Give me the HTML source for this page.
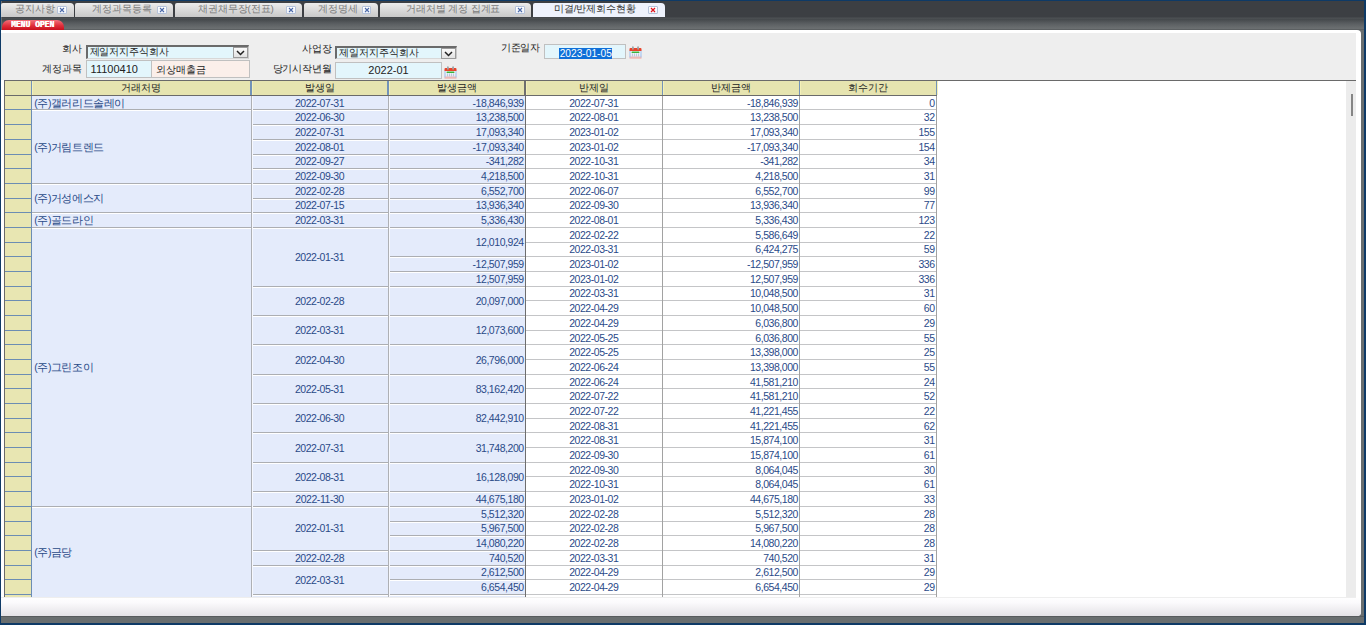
<!DOCTYPE html>
<html><head><meta charset="utf-8">
<style>
html,body{margin:0;padding:0;}
body{width:1366px;height:625px;overflow:hidden;position:relative;background:#696e6f;font-family:"Liberation Sans",sans-serif;}
.a{position:absolute;}
.t{position:absolute;height:14px;line-height:14px;font-size:10.5px;color:#2a4a88;white-space:nowrap;letter-spacing:-0.45px;}
.tl{text-align:left;}
.tc{text-align:center;}
.tr{text-align:right;}
.th{color:#222;text-align:center;top:81px;letter-spacing:0;font-size:9.6px;}
.tab{top:2.5px;height:14.5px;border-radius:2px 4px 0 0;background:linear-gradient(#ececec,#d6d6d6 60%,#c9c9c9);}
.act{background:#eef2fc;}
.tabt{top:1.8px;height:14.5px;line-height:14.5px;font-size:9.8px;letter-spacing:-0.1px;color:#7a7a7a;white-space:nowrap;}
.cls{top:6.3px;width:7.6px;height:5.8px;border:1px solid #b4c2da;background:linear-gradient(#ffffff,#eef2f8);border-radius:1px;overflow:hidden;}
.cls svg{position:absolute;left:0;top:0;}
svg{display:block;}
.lbl{position:absolute;font-size:9.8px;letter-spacing:-0.2px;color:#1a1a1a;white-space:nowrap;line-height:12px;text-align:right;}
.inp{position:absolute;box-sizing:border-box;border:1px solid #c0c0c0;background:#e3f6fc;font-size:11px;color:#222;line-height:15px;white-space:nowrap;}
.ko{font-size:9.8px;letter-spacing:-0.1px;}
.sel{border-top:2px solid #6a6a6a;border-left:2px solid #6a6a6a;border-right:1px solid #c8c8c8;border-bottom:1px solid #d8d8d8;}
.dd{position:absolute;right:0;top:0;width:15px;height:11px;box-sizing:border-box;border:1px solid #9a9a9a;background:linear-gradient(#fafafa,#e2e2e2);}
</style></head><body>
<!-- frame -->
<div class="a" style="left:0;top:0;width:1366px;height:1px;background:#0e3a66;"></div>
<div class="a" style="left:1.5px;top:1px;width:1362.5px;height:16px;background:#3c3f43;"></div>
<div class="a" style="left:1.5px;top:17px;width:1362.5px;height:12.5px;background:linear-gradient(#3c3f43 0px,#4d5154 1px,#464a4d 2.5px,#5c6063 55%,#6b6f71 88%,#55595b 100%);"></div>
<div class="a tab" style="left:1px;width:72.5px;"></div>
<div class="a tabt" style="left:15px;">공지사항</div>
<div class="a cls" style="left:57px;"><svg width="8" height="6" viewBox="0 0 8 6"><path d="M2 1 L6 5 M6 1 L2 5" stroke="#4a68a8" stroke-width="1.1"/></svg></div>
<div class="a tab" style="left:75px;width:98px;"></div>
<div class="a tabt" style="left:92px;">계정과목등록</div>
<div class="a cls" style="left:157px;"><svg width="8" height="6" viewBox="0 0 8 6"><path d="M2 1 L6 5 M6 1 L2 5" stroke="#4a68a8" stroke-width="1.1"/></svg></div>
<div class="a tab" style="left:175px;width:127px;"></div>
<div class="a tabt" style="left:198px;">채권채무장(전표)</div>
<div class="a cls" style="left:286px;"><svg width="8" height="6" viewBox="0 0 8 6"><path d="M2 1 L6 5 M6 1 L2 5" stroke="#4a68a8" stroke-width="1.1"/></svg></div>
<div class="a tab" style="left:304px;width:73.5px;"></div>
<div class="a tabt" style="left:318px;">계정명세</div>
<div class="a cls" style="left:361.5px;"><svg width="8" height="6" viewBox="0 0 8 6"><path d="M2 1 L6 5 M6 1 L2 5" stroke="#4a68a8" stroke-width="1.1"/></svg></div>
<div class="a tab" style="left:379.5px;width:151.5px;"></div>
<div class="a tabt" style="left:406px;">거래처별 계정 집계표</div>
<div class="a cls" style="left:515px;"><svg width="8" height="6" viewBox="0 0 8 6"><path d="M2 1 L6 5 M6 1 L2 5" stroke="#4a68a8" stroke-width="1.1"/></svg></div>
<div class="a tab act" style="left:533px;width:132px;"></div>
<div class="a tabt" style="left:554px;color:#333;">미결/반제회수현황</div>
<div class="a cls" style="left:648px;"><svg width="8" height="6" viewBox="0 0 8 6"><path d="M2 1 L6 5 M6 1 L2 5" stroke="#e0101a" stroke-width="1.2"/></svg></div>
<div class="a" style="left:1.5px;top:19.5px;width:62.5px;height:10px;border-radius:7px 7px 0 0;background:linear-gradient(#f2707a,#e0303c 55%,#c8101c);"></div>
<div class="a" style="left:11px;top:20px;font:bold 8px/10px 'Liberation Mono',monospace;color:#fff;letter-spacing:0;text-shadow:0.4px 0 0 #fff;transform:scaleY(1.2);transform-origin:0 60%;">MENU OPEN</div>
<!-- panel -->
<div class="a" style="left:1px;top:29.5px;width:1360px;height:586px;background:#fff;border-radius:0 4px 4px 0;"></div>
<div class="a" style="left:1px;top:33px;width:1355px;height:47.3px;background:#eeeeee;"></div>
<div class="a" style="left:1px;top:597px;width:1359.5px;height:18.6px;border-radius:0 0 4px 0;background:linear-gradient(#ffffff,#fbfafc 30%,#e4e2e6);"></div>
<div class="a" style="left:0;top:0;width:1.2px;height:625px;background:#0e3a66;"></div>
<div class="a" style="left:1364px;top:0;width:2px;height:625px;background:#0e3a66;"></div>
<div class="a" style="left:0;top:623px;width:1366px;height:2px;background:#0e3a66;"></div>
<!-- form -->
<div class="lbl" style="left:20px;top:43px;width:61.5px;">회사</div>
<div class="inp sel" style="left:85.6px;top:45.4px;width:163.3px;height:13.2px;line-height:9.5px;padding-left:2px;"><span class="ko">제일저지주식회사</span><div class="dd"><svg width="13" height="9" viewBox="0 0 13 9"><path d="M3 3 L6.5 6.5 L10 3" stroke="#222" stroke-width="1.5" fill="none"/></svg></div></div>
<div class="lbl" style="left:20px;top:62.5px;width:61.5px;">계정과목</div>
<div class="inp" style="left:85.6px;top:60.3px;width:66px;height:18.1px;line-height:16px;padding-left:4px;">11100410</div>
<div class="inp" style="left:151.2px;top:60.3px;width:98.5px;height:18.1px;line-height:16px;padding-left:4px;background:#fbefea;"><span class="ko">외상매출금</span></div>
<div class="lbl" style="left:250px;top:43px;width:81.5px;">사업장</div>
<div class="inp sel" style="left:335.3px;top:45.5px;width:121.5px;height:13.3px;line-height:9.5px;padding-left:2px;"><span class="ko">제일저지주식회사</span><div class="dd"><svg width="13" height="9" viewBox="0 0 13 9"><path d="M3 3 L6.5 6.5 L10 3" stroke="#222" stroke-width="1.5" fill="none"/></svg></div></div>
<div class="lbl" style="left:250px;top:62.5px;width:81.5px;">당기시작년월</div>
<div class="inp" style="left:335.3px;top:62.4px;width:106.4px;height:16.4px;line-height:14px;text-align:center;">2022-01</div>
<div class="a" style="left:444.2px;top:65.5px;"><svg width="13" height="13" viewBox="0 0 13 13"><defs><linearGradient id="cb" x1="0" y1="0" x2="0" y2="1"><stop offset="0" stop-color="#f4f8fc"/><stop offset="0.6" stop-color="#e8eef8"/><stop offset="1" stop-color="#f0a098"/></linearGradient></defs><rect x="0.5" y="4.5" width="12" height="8" fill="url(#cb)"/><rect x="0.5" y="4.5" width="1" height="7" fill="#9cc0ec"/><rect x="11.5" y="4.5" width="1" height="7" fill="#9cc0ec"/><path d="M0.5 5 V3 Q0.5 2 1.5 2 H11.5 Q12.5 2 12.5 3 V5 Z" fill="#e8432a"/><rect x="2.5" y="5.6" width="8" height="1.3" rx="0.6" fill="#3cb43c"/><path d="M3.5 7.5v3M5.5 7.5v3M7.5 7.5v3M9.5 7.5v3" stroke="#b8c4d8" stroke-width="0.9"/><rect x="3" y="0.3" width="1.8" height="3.4" rx="0.9" fill="#a0a4a8"/><rect x="8.2" y="0.3" width="1.8" height="3.4" rx="0.9" fill="#a0a4a8"/></svg></div>
<div class="lbl" style="left:470px;top:41.5px;width:70px;">기준일자</div>
<div class="inp" style="left:544.2px;top:44.2px;width:81.4px;height:14.5px;line-height:12px;"><span style="position:absolute;left:14px;top:2.9px;height:11px;line-height:11px;background:#0f6fd8;color:#fff;padding:0 0.5px;font-size:10.2px;">2023-01-05</span></div>
<div class="a" style="left:628.5px;top:46px;"><svg width="13" height="13" viewBox="0 0 13 13"><defs><linearGradient id="cb" x1="0" y1="0" x2="0" y2="1"><stop offset="0" stop-color="#f4f8fc"/><stop offset="0.6" stop-color="#e8eef8"/><stop offset="1" stop-color="#f0a098"/></linearGradient></defs><rect x="0.5" y="4.5" width="12" height="8" fill="url(#cb)"/><rect x="0.5" y="4.5" width="1" height="7" fill="#9cc0ec"/><rect x="11.5" y="4.5" width="1" height="7" fill="#9cc0ec"/><path d="M0.5 5 V3 Q0.5 2 1.5 2 H11.5 Q12.5 2 12.5 3 V5 Z" fill="#e8432a"/><rect x="2.5" y="5.6" width="8" height="1.3" rx="0.6" fill="#3cb43c"/><path d="M3.5 7.5v3M5.5 7.5v3M7.5 7.5v3M9.5 7.5v3" stroke="#b8c4d8" stroke-width="0.9"/><rect x="3" y="0.3" width="1.8" height="3.4" rx="0.9" fill="#a0a4a8"/><rect x="8.2" y="0.3" width="1.8" height="3.4" rx="0.9" fill="#a0a4a8"/></svg></div>
<!-- table -->
<div class="a" style="left:1px;top:80.3px;width:1355px;height:516.7px;background:#fff;"></div>
<div class="a" style="left:4.5px;top:80.3px;width:932.10px;height:15px;background:#e6e4b0;"></div>
<div class="t th" style="left:31.30px;top:81px;width:219.70px;">거래처명</div>
<div class="t th" style="left:251.00px;top:81px;width:137.00px;">발생일</div>
<div class="t th" style="left:388.00px;top:81px;width:137.20px;">발생금액</div>
<div class="t th" style="left:525.20px;top:81px;width:137.20px;">반제일</div>
<div class="t th" style="left:662.40px;top:81px;width:137.10px;">반제금액</div>
<div class="t th" style="left:799.50px;top:81px;width:137.10px;">회수기간</div>
<div class="a" style="left:30.55px;top:80.3px;width:1.5px;height:15px;background:#7393b8;"></div>
<div class="a" style="left:32.05px;top:80.3px;width:1px;height:15px;background:#f3f0b8;"></div>
<div class="a" style="left:250.25px;top:80.3px;width:1.5px;height:15px;background:#7393b8;"></div>
<div class="a" style="left:251.75px;top:80.3px;width:1px;height:15px;background:#f3f0b8;"></div>
<div class="a" style="left:387.25px;top:80.3px;width:1.5px;height:15px;background:#7393b8;"></div>
<div class="a" style="left:388.75px;top:80.3px;width:1px;height:15px;background:#f3f0b8;"></div>
<div class="a" style="left:524.45px;top:80.3px;width:1.5px;height:15px;background:#6e6e6e;"></div>
<div class="a" style="left:525.95px;top:80.3px;width:1px;height:15px;background:#f3f0b8;"></div>
<div class="a" style="left:661.65px;top:80.3px;width:1.5px;height:15px;background:#7393b8;"></div>
<div class="a" style="left:663.15px;top:80.3px;width:1px;height:15px;background:#f3f0b8;"></div>
<div class="a" style="left:798.75px;top:80.3px;width:1.5px;height:15px;background:#7393b8;"></div>
<div class="a" style="left:800.25px;top:80.3px;width:1px;height:15px;background:#f3f0b8;"></div>
<div class="a" style="left:935.85px;top:80.3px;width:1.5px;height:15px;background:#7393b8;"></div>
<div class="a" style="left:937.35px;top:80.3px;width:1px;height:15px;background:#f3f0b8;"></div>
<div class="a " style="left:4.50px;top:95.30px;width:26.80px;height:501.70px;background:#e8e6b2;"></div>
<div class="a " style="left:4.50px;top:109.48px;width:26.80px;height:1.00px;background:#6c8db3;"></div>
<div class="a " style="left:4.50px;top:124.16px;width:26.80px;height:1.00px;background:#6c8db3;"></div>
<div class="a " style="left:4.50px;top:138.84px;width:26.80px;height:1.00px;background:#6c8db3;"></div>
<div class="a " style="left:4.50px;top:153.52px;width:26.80px;height:1.00px;background:#6c8db3;"></div>
<div class="a " style="left:4.50px;top:168.20px;width:26.80px;height:1.00px;background:#6c8db3;"></div>
<div class="a " style="left:4.50px;top:182.88px;width:26.80px;height:1.00px;background:#6c8db3;"></div>
<div class="a " style="left:4.50px;top:197.56px;width:26.80px;height:1.00px;background:#6c8db3;"></div>
<div class="a " style="left:4.50px;top:212.24px;width:26.80px;height:1.00px;background:#6c8db3;"></div>
<div class="a " style="left:4.50px;top:226.92px;width:26.80px;height:1.00px;background:#6c8db3;"></div>
<div class="a " style="left:4.50px;top:241.60px;width:26.80px;height:1.00px;background:#6c8db3;"></div>
<div class="a " style="left:4.50px;top:256.28px;width:26.80px;height:1.00px;background:#6c8db3;"></div>
<div class="a " style="left:4.50px;top:270.96px;width:26.80px;height:1.00px;background:#6c8db3;"></div>
<div class="a " style="left:4.50px;top:285.64px;width:26.80px;height:1.00px;background:#6c8db3;"></div>
<div class="a " style="left:4.50px;top:300.32px;width:26.80px;height:1.00px;background:#6c8db3;"></div>
<div class="a " style="left:4.50px;top:315.00px;width:26.80px;height:1.00px;background:#6c8db3;"></div>
<div class="a " style="left:4.50px;top:329.68px;width:26.80px;height:1.00px;background:#6c8db3;"></div>
<div class="a " style="left:4.50px;top:344.36px;width:26.80px;height:1.00px;background:#6c8db3;"></div>
<div class="a " style="left:4.50px;top:359.04px;width:26.80px;height:1.00px;background:#6c8db3;"></div>
<div class="a " style="left:4.50px;top:373.72px;width:26.80px;height:1.00px;background:#6c8db3;"></div>
<div class="a " style="left:4.50px;top:388.40px;width:26.80px;height:1.00px;background:#6c8db3;"></div>
<div class="a " style="left:4.50px;top:403.08px;width:26.80px;height:1.00px;background:#6c8db3;"></div>
<div class="a " style="left:4.50px;top:417.76px;width:26.80px;height:1.00px;background:#6c8db3;"></div>
<div class="a " style="left:4.50px;top:432.44px;width:26.80px;height:1.00px;background:#6c8db3;"></div>
<div class="a " style="left:4.50px;top:447.12px;width:26.80px;height:1.00px;background:#6c8db3;"></div>
<div class="a " style="left:4.50px;top:461.80px;width:26.80px;height:1.00px;background:#6c8db3;"></div>
<div class="a " style="left:4.50px;top:476.48px;width:26.80px;height:1.00px;background:#6c8db3;"></div>
<div class="a " style="left:4.50px;top:491.16px;width:26.80px;height:1.00px;background:#6c8db3;"></div>
<div class="a " style="left:4.50px;top:505.84px;width:26.80px;height:1.00px;background:#6c8db3;"></div>
<div class="a " style="left:4.50px;top:520.52px;width:26.80px;height:1.00px;background:#6c8db3;"></div>
<div class="a " style="left:4.50px;top:535.20px;width:26.80px;height:1.00px;background:#6c8db3;"></div>
<div class="a " style="left:4.50px;top:549.88px;width:26.80px;height:1.00px;background:#6c8db3;"></div>
<div class="a " style="left:4.50px;top:564.56px;width:26.80px;height:1.00px;background:#6c8db3;"></div>
<div class="a " style="left:4.50px;top:579.24px;width:26.80px;height:1.00px;background:#6c8db3;"></div>
<div class="a " style="left:4.50px;top:593.92px;width:26.80px;height:1.00px;background:#6c8db3;"></div>
<div class="a " style="left:31.30px;top:95.30px;width:493.90px;height:501.70px;background:#e4ebfb;"></div>
<div class="a " style="left:525.20px;top:95.30px;width:411.40px;height:501.70px;background:#ffffff;"></div>
<div class="t tl" style="left:34.30px;top:95.64px;width:213.70px;">(주)갤러리드솔레이</div>
<div class="a " style="left:31.30px;top:109.48px;width:219.70px;height:1.00px;background:#acaeb2;"></div>
<div class="a " style="left:31.30px;top:110.48px;width:219.70px;height:1.00px;background:#ffffff;"></div>
<div class="t tl" style="left:34.30px;top:139.68px;width:213.70px;">(주)거림트렌드</div>
<div class="a " style="left:31.30px;top:182.88px;width:219.70px;height:1.00px;background:#acaeb2;"></div>
<div class="a " style="left:31.30px;top:183.88px;width:219.70px;height:1.00px;background:#ffffff;"></div>
<div class="t tl" style="left:34.30px;top:191.06px;width:213.70px;">(주)거성에스지</div>
<div class="a " style="left:31.30px;top:212.24px;width:219.70px;height:1.00px;background:#acaeb2;"></div>
<div class="a " style="left:31.30px;top:213.24px;width:219.70px;height:1.00px;background:#ffffff;"></div>
<div class="t tl" style="left:34.30px;top:213.08px;width:213.70px;">(주)골드라인</div>
<div class="a " style="left:31.30px;top:226.92px;width:219.70px;height:1.00px;background:#acaeb2;"></div>
<div class="a " style="left:31.30px;top:227.92px;width:219.70px;height:1.00px;background:#ffffff;"></div>
<div class="t tl" style="left:34.30px;top:359.88px;width:213.70px;">(주)그린조이</div>
<div class="a " style="left:31.30px;top:505.84px;width:219.70px;height:1.00px;background:#acaeb2;"></div>
<div class="a " style="left:31.30px;top:506.84px;width:219.70px;height:1.00px;background:#ffffff;"></div>
<div class="t tl" style="left:34.30px;top:544.67px;width:213.70px;">(주)금당</div>
<div class="t tc" style="left:251.00px;top:95.64px;width:137.00px;">2022-07-31</div>
<div class="a " style="left:251.00px;top:109.48px;width:137.00px;height:1.00px;background:#acaeb2;"></div>
<div class="a " style="left:251.00px;top:110.48px;width:137.00px;height:1.00px;background:#ffffff;"></div>
<div class="t tc" style="left:251.00px;top:110.32px;width:137.00px;">2022-06-30</div>
<div class="a " style="left:251.00px;top:124.16px;width:137.00px;height:1.00px;background:#acaeb2;"></div>
<div class="a " style="left:251.00px;top:125.16px;width:137.00px;height:1.00px;background:#ffffff;"></div>
<div class="t tc" style="left:251.00px;top:125.00px;width:137.00px;">2022-07-31</div>
<div class="a " style="left:251.00px;top:138.84px;width:137.00px;height:1.00px;background:#acaeb2;"></div>
<div class="a " style="left:251.00px;top:139.84px;width:137.00px;height:1.00px;background:#ffffff;"></div>
<div class="t tc" style="left:251.00px;top:139.68px;width:137.00px;">2022-08-01</div>
<div class="a " style="left:251.00px;top:153.52px;width:137.00px;height:1.00px;background:#acaeb2;"></div>
<div class="a " style="left:251.00px;top:154.52px;width:137.00px;height:1.00px;background:#ffffff;"></div>
<div class="t tc" style="left:251.00px;top:154.36px;width:137.00px;">2022-09-27</div>
<div class="a " style="left:251.00px;top:168.20px;width:137.00px;height:1.00px;background:#acaeb2;"></div>
<div class="a " style="left:251.00px;top:169.20px;width:137.00px;height:1.00px;background:#ffffff;"></div>
<div class="t tc" style="left:251.00px;top:169.04px;width:137.00px;">2022-09-30</div>
<div class="a " style="left:251.00px;top:182.88px;width:137.00px;height:1.00px;background:#acaeb2;"></div>
<div class="a " style="left:251.00px;top:183.88px;width:137.00px;height:1.00px;background:#ffffff;"></div>
<div class="t tc" style="left:251.00px;top:183.72px;width:137.00px;">2022-02-28</div>
<div class="a " style="left:251.00px;top:197.56px;width:137.00px;height:1.00px;background:#acaeb2;"></div>
<div class="a " style="left:251.00px;top:198.56px;width:137.00px;height:1.00px;background:#ffffff;"></div>
<div class="t tc" style="left:251.00px;top:198.40px;width:137.00px;">2022-07-15</div>
<div class="a " style="left:251.00px;top:212.24px;width:137.00px;height:1.00px;background:#acaeb2;"></div>
<div class="a " style="left:251.00px;top:213.24px;width:137.00px;height:1.00px;background:#ffffff;"></div>
<div class="t tc" style="left:251.00px;top:213.08px;width:137.00px;">2022-03-31</div>
<div class="a " style="left:251.00px;top:226.92px;width:137.00px;height:1.00px;background:#acaeb2;"></div>
<div class="a " style="left:251.00px;top:227.92px;width:137.00px;height:1.00px;background:#ffffff;"></div>
<div class="t tc" style="left:251.00px;top:249.78px;width:137.00px;">2022-01-31</div>
<div class="a " style="left:251.00px;top:285.64px;width:137.00px;height:1.00px;background:#acaeb2;"></div>
<div class="a " style="left:251.00px;top:286.64px;width:137.00px;height:1.00px;background:#ffffff;"></div>
<div class="t tc" style="left:251.00px;top:293.82px;width:137.00px;">2022-02-28</div>
<div class="a " style="left:251.00px;top:315.00px;width:137.00px;height:1.00px;background:#acaeb2;"></div>
<div class="a " style="left:251.00px;top:316.00px;width:137.00px;height:1.00px;background:#ffffff;"></div>
<div class="t tc" style="left:251.00px;top:323.18px;width:137.00px;">2022-03-31</div>
<div class="a " style="left:251.00px;top:344.36px;width:137.00px;height:1.00px;background:#acaeb2;"></div>
<div class="a " style="left:251.00px;top:345.36px;width:137.00px;height:1.00px;background:#ffffff;"></div>
<div class="t tc" style="left:251.00px;top:352.54px;width:137.00px;">2022-04-30</div>
<div class="a " style="left:251.00px;top:373.72px;width:137.00px;height:1.00px;background:#acaeb2;"></div>
<div class="a " style="left:251.00px;top:374.72px;width:137.00px;height:1.00px;background:#ffffff;"></div>
<div class="t tc" style="left:251.00px;top:381.90px;width:137.00px;">2022-05-31</div>
<div class="a " style="left:251.00px;top:403.08px;width:137.00px;height:1.00px;background:#acaeb2;"></div>
<div class="a " style="left:251.00px;top:404.08px;width:137.00px;height:1.00px;background:#ffffff;"></div>
<div class="t tc" style="left:251.00px;top:411.26px;width:137.00px;">2022-06-30</div>
<div class="a " style="left:251.00px;top:432.44px;width:137.00px;height:1.00px;background:#acaeb2;"></div>
<div class="a " style="left:251.00px;top:433.44px;width:137.00px;height:1.00px;background:#ffffff;"></div>
<div class="t tc" style="left:251.00px;top:440.62px;width:137.00px;">2022-07-31</div>
<div class="a " style="left:251.00px;top:461.80px;width:137.00px;height:1.00px;background:#acaeb2;"></div>
<div class="a " style="left:251.00px;top:462.80px;width:137.00px;height:1.00px;background:#ffffff;"></div>
<div class="t tc" style="left:251.00px;top:469.98px;width:137.00px;">2022-08-31</div>
<div class="a " style="left:251.00px;top:491.16px;width:137.00px;height:1.00px;background:#acaeb2;"></div>
<div class="a " style="left:251.00px;top:492.16px;width:137.00px;height:1.00px;background:#ffffff;"></div>
<div class="t tc" style="left:251.00px;top:492.00px;width:137.00px;">2022-11-30</div>
<div class="a " style="left:251.00px;top:505.84px;width:137.00px;height:1.00px;background:#acaeb2;"></div>
<div class="a " style="left:251.00px;top:506.84px;width:137.00px;height:1.00px;background:#ffffff;"></div>
<div class="t tc" style="left:251.00px;top:521.36px;width:137.00px;">2022-01-31</div>
<div class="a " style="left:251.00px;top:549.88px;width:137.00px;height:1.00px;background:#acaeb2;"></div>
<div class="a " style="left:251.00px;top:550.88px;width:137.00px;height:1.00px;background:#ffffff;"></div>
<div class="t tc" style="left:251.00px;top:550.72px;width:137.00px;">2022-02-28</div>
<div class="a " style="left:251.00px;top:564.56px;width:137.00px;height:1.00px;background:#acaeb2;"></div>
<div class="a " style="left:251.00px;top:565.56px;width:137.00px;height:1.00px;background:#ffffff;"></div>
<div class="t tc" style="left:251.00px;top:572.74px;width:137.00px;">2022-03-31</div>
<div class="a " style="left:251.00px;top:593.92px;width:137.00px;height:1.00px;background:#acaeb2;"></div>
<div class="a " style="left:251.00px;top:594.92px;width:137.00px;height:1.00px;background:#ffffff;"></div>
<div class="t tr" style="left:388.00px;top:95.64px;width:135.70px;">-18,846,939</div>
<div class="a " style="left:388.00px;top:109.48px;width:137.20px;height:1.00px;background:#acaeb2;"></div>
<div class="a " style="left:388.00px;top:110.48px;width:137.20px;height:1.00px;background:#ffffff;"></div>
<div class="t tr" style="left:388.00px;top:110.32px;width:135.70px;">13,238,500</div>
<div class="a " style="left:388.00px;top:124.16px;width:137.20px;height:1.00px;background:#acaeb2;"></div>
<div class="a " style="left:388.00px;top:125.16px;width:137.20px;height:1.00px;background:#ffffff;"></div>
<div class="t tr" style="left:388.00px;top:125.00px;width:135.70px;">17,093,340</div>
<div class="a " style="left:388.00px;top:138.84px;width:137.20px;height:1.00px;background:#acaeb2;"></div>
<div class="a " style="left:388.00px;top:139.84px;width:137.20px;height:1.00px;background:#ffffff;"></div>
<div class="t tr" style="left:388.00px;top:139.68px;width:135.70px;">-17,093,340</div>
<div class="a " style="left:388.00px;top:153.52px;width:137.20px;height:1.00px;background:#acaeb2;"></div>
<div class="a " style="left:388.00px;top:154.52px;width:137.20px;height:1.00px;background:#ffffff;"></div>
<div class="t tr" style="left:388.00px;top:154.36px;width:135.70px;">-341,282</div>
<div class="a " style="left:388.00px;top:168.20px;width:137.20px;height:1.00px;background:#acaeb2;"></div>
<div class="a " style="left:388.00px;top:169.20px;width:137.20px;height:1.00px;background:#ffffff;"></div>
<div class="t tr" style="left:388.00px;top:169.04px;width:135.70px;">4,218,500</div>
<div class="a " style="left:388.00px;top:182.88px;width:137.20px;height:1.00px;background:#acaeb2;"></div>
<div class="a " style="left:388.00px;top:183.88px;width:137.20px;height:1.00px;background:#ffffff;"></div>
<div class="t tr" style="left:388.00px;top:183.72px;width:135.70px;">6,552,700</div>
<div class="a " style="left:388.00px;top:197.56px;width:137.20px;height:1.00px;background:#acaeb2;"></div>
<div class="a " style="left:388.00px;top:198.56px;width:137.20px;height:1.00px;background:#ffffff;"></div>
<div class="t tr" style="left:388.00px;top:198.40px;width:135.70px;">13,936,340</div>
<div class="a " style="left:388.00px;top:212.24px;width:137.20px;height:1.00px;background:#acaeb2;"></div>
<div class="a " style="left:388.00px;top:213.24px;width:137.20px;height:1.00px;background:#ffffff;"></div>
<div class="t tr" style="left:388.00px;top:213.08px;width:135.70px;">5,336,430</div>
<div class="a " style="left:388.00px;top:226.92px;width:137.20px;height:1.00px;background:#acaeb2;"></div>
<div class="a " style="left:388.00px;top:227.92px;width:137.20px;height:1.00px;background:#ffffff;"></div>
<div class="t tr" style="left:388.00px;top:235.10px;width:135.70px;">12,010,924</div>
<div class="a " style="left:388.00px;top:256.28px;width:137.20px;height:1.00px;background:#acaeb2;"></div>
<div class="a " style="left:388.00px;top:257.28px;width:137.20px;height:1.00px;background:#ffffff;"></div>
<div class="t tr" style="left:388.00px;top:257.12px;width:135.70px;">-12,507,959</div>
<div class="a " style="left:388.00px;top:270.96px;width:137.20px;height:1.00px;background:#acaeb2;"></div>
<div class="a " style="left:388.00px;top:271.96px;width:137.20px;height:1.00px;background:#ffffff;"></div>
<div class="t tr" style="left:388.00px;top:271.80px;width:135.70px;">12,507,959</div>
<div class="a " style="left:388.00px;top:285.64px;width:137.20px;height:1.00px;background:#acaeb2;"></div>
<div class="a " style="left:388.00px;top:286.64px;width:137.20px;height:1.00px;background:#ffffff;"></div>
<div class="t tr" style="left:388.00px;top:293.82px;width:135.70px;">20,097,000</div>
<div class="a " style="left:388.00px;top:315.00px;width:137.20px;height:1.00px;background:#acaeb2;"></div>
<div class="a " style="left:388.00px;top:316.00px;width:137.20px;height:1.00px;background:#ffffff;"></div>
<div class="t tr" style="left:388.00px;top:323.18px;width:135.70px;">12,073,600</div>
<div class="a " style="left:388.00px;top:344.36px;width:137.20px;height:1.00px;background:#acaeb2;"></div>
<div class="a " style="left:388.00px;top:345.36px;width:137.20px;height:1.00px;background:#ffffff;"></div>
<div class="t tr" style="left:388.00px;top:352.54px;width:135.70px;">26,796,000</div>
<div class="a " style="left:388.00px;top:373.72px;width:137.20px;height:1.00px;background:#acaeb2;"></div>
<div class="a " style="left:388.00px;top:374.72px;width:137.20px;height:1.00px;background:#ffffff;"></div>
<div class="t tr" style="left:388.00px;top:381.90px;width:135.70px;">83,162,420</div>
<div class="a " style="left:388.00px;top:403.08px;width:137.20px;height:1.00px;background:#acaeb2;"></div>
<div class="a " style="left:388.00px;top:404.08px;width:137.20px;height:1.00px;background:#ffffff;"></div>
<div class="t tr" style="left:388.00px;top:411.26px;width:135.70px;">82,442,910</div>
<div class="a " style="left:388.00px;top:432.44px;width:137.20px;height:1.00px;background:#acaeb2;"></div>
<div class="a " style="left:388.00px;top:433.44px;width:137.20px;height:1.00px;background:#ffffff;"></div>
<div class="t tr" style="left:388.00px;top:440.62px;width:135.70px;">31,748,200</div>
<div class="a " style="left:388.00px;top:461.80px;width:137.20px;height:1.00px;background:#acaeb2;"></div>
<div class="a " style="left:388.00px;top:462.80px;width:137.20px;height:1.00px;background:#ffffff;"></div>
<div class="t tr" style="left:388.00px;top:469.98px;width:135.70px;">16,128,090</div>
<div class="a " style="left:388.00px;top:491.16px;width:137.20px;height:1.00px;background:#acaeb2;"></div>
<div class="a " style="left:388.00px;top:492.16px;width:137.20px;height:1.00px;background:#ffffff;"></div>
<div class="t tr" style="left:388.00px;top:492.00px;width:135.70px;">44,675,180</div>
<div class="a " style="left:388.00px;top:505.84px;width:137.20px;height:1.00px;background:#acaeb2;"></div>
<div class="a " style="left:388.00px;top:506.84px;width:137.20px;height:1.00px;background:#ffffff;"></div>
<div class="t tr" style="left:388.00px;top:506.68px;width:135.70px;">5,512,320</div>
<div class="a " style="left:388.00px;top:520.52px;width:137.20px;height:1.00px;background:#acaeb2;"></div>
<div class="a " style="left:388.00px;top:521.52px;width:137.20px;height:1.00px;background:#ffffff;"></div>
<div class="t tr" style="left:388.00px;top:521.36px;width:135.70px;">5,967,500</div>
<div class="a " style="left:388.00px;top:535.20px;width:137.20px;height:1.00px;background:#acaeb2;"></div>
<div class="a " style="left:388.00px;top:536.20px;width:137.20px;height:1.00px;background:#ffffff;"></div>
<div class="t tr" style="left:388.00px;top:536.04px;width:135.70px;">14,080,220</div>
<div class="a " style="left:388.00px;top:549.88px;width:137.20px;height:1.00px;background:#acaeb2;"></div>
<div class="a " style="left:388.00px;top:550.88px;width:137.20px;height:1.00px;background:#ffffff;"></div>
<div class="t tr" style="left:388.00px;top:550.72px;width:135.70px;">740,520</div>
<div class="a " style="left:388.00px;top:564.56px;width:137.20px;height:1.00px;background:#acaeb2;"></div>
<div class="a " style="left:388.00px;top:565.56px;width:137.20px;height:1.00px;background:#ffffff;"></div>
<div class="t tr" style="left:388.00px;top:565.40px;width:135.70px;">2,612,500</div>
<div class="a " style="left:388.00px;top:579.24px;width:137.20px;height:1.00px;background:#acaeb2;"></div>
<div class="a " style="left:388.00px;top:580.24px;width:137.20px;height:1.00px;background:#ffffff;"></div>
<div class="t tr" style="left:388.00px;top:580.08px;width:135.70px;">6,654,450</div>
<div class="a " style="left:388.00px;top:593.92px;width:137.20px;height:1.00px;background:#acaeb2;"></div>
<div class="a " style="left:388.00px;top:594.92px;width:137.20px;height:1.00px;background:#ffffff;"></div>
<div class="t tc" style="left:525.20px;top:95.64px;width:137.20px;">2022-07-31</div>
<div class="t tr" style="left:662.40px;top:95.64px;width:135.60px;">-18,846,939</div>
<div class="t tr" style="left:799.50px;top:95.64px;width:135.10px;">0</div>
<div class="a " style="left:525.20px;top:109.48px;width:137.20px;height:1.00px;background:#c4c5c7;"></div>
<div class="a " style="left:662.40px;top:109.48px;width:137.10px;height:1.00px;background:#c4c5c7;"></div>
<div class="a " style="left:799.50px;top:109.48px;width:137.10px;height:1.00px;background:#c4c5c7;"></div>
<div class="t tc" style="left:525.20px;top:110.32px;width:137.20px;">2022-08-01</div>
<div class="t tr" style="left:662.40px;top:110.32px;width:135.60px;">13,238,500</div>
<div class="t tr" style="left:799.50px;top:110.32px;width:135.10px;">32</div>
<div class="a " style="left:525.20px;top:124.16px;width:137.20px;height:1.00px;background:#c4c5c7;"></div>
<div class="a " style="left:662.40px;top:124.16px;width:137.10px;height:1.00px;background:#c4c5c7;"></div>
<div class="a " style="left:799.50px;top:124.16px;width:137.10px;height:1.00px;background:#c4c5c7;"></div>
<div class="t tc" style="left:525.20px;top:125.00px;width:137.20px;">2023-01-02</div>
<div class="t tr" style="left:662.40px;top:125.00px;width:135.60px;">17,093,340</div>
<div class="t tr" style="left:799.50px;top:125.00px;width:135.10px;">155</div>
<div class="a " style="left:525.20px;top:138.84px;width:137.20px;height:1.00px;background:#c4c5c7;"></div>
<div class="a " style="left:662.40px;top:138.84px;width:137.10px;height:1.00px;background:#c4c5c7;"></div>
<div class="a " style="left:799.50px;top:138.84px;width:137.10px;height:1.00px;background:#c4c5c7;"></div>
<div class="t tc" style="left:525.20px;top:139.68px;width:137.20px;">2023-01-02</div>
<div class="t tr" style="left:662.40px;top:139.68px;width:135.60px;">-17,093,340</div>
<div class="t tr" style="left:799.50px;top:139.68px;width:135.10px;">154</div>
<div class="a " style="left:525.20px;top:153.52px;width:137.20px;height:1.00px;background:#c4c5c7;"></div>
<div class="a " style="left:662.40px;top:153.52px;width:137.10px;height:1.00px;background:#c4c5c7;"></div>
<div class="a " style="left:799.50px;top:153.52px;width:137.10px;height:1.00px;background:#c4c5c7;"></div>
<div class="t tc" style="left:525.20px;top:154.36px;width:137.20px;">2022-10-31</div>
<div class="t tr" style="left:662.40px;top:154.36px;width:135.60px;">-341,282</div>
<div class="t tr" style="left:799.50px;top:154.36px;width:135.10px;">34</div>
<div class="a " style="left:525.20px;top:168.20px;width:137.20px;height:1.00px;background:#c4c5c7;"></div>
<div class="a " style="left:662.40px;top:168.20px;width:137.10px;height:1.00px;background:#c4c5c7;"></div>
<div class="a " style="left:799.50px;top:168.20px;width:137.10px;height:1.00px;background:#c4c5c7;"></div>
<div class="t tc" style="left:525.20px;top:169.04px;width:137.20px;">2022-10-31</div>
<div class="t tr" style="left:662.40px;top:169.04px;width:135.60px;">4,218,500</div>
<div class="t tr" style="left:799.50px;top:169.04px;width:135.10px;">31</div>
<div class="a " style="left:525.20px;top:182.88px;width:137.20px;height:1.00px;background:#c4c5c7;"></div>
<div class="a " style="left:662.40px;top:182.88px;width:137.10px;height:1.00px;background:#c4c5c7;"></div>
<div class="a " style="left:799.50px;top:182.88px;width:137.10px;height:1.00px;background:#c4c5c7;"></div>
<div class="t tc" style="left:525.20px;top:183.72px;width:137.20px;">2022-06-07</div>
<div class="t tr" style="left:662.40px;top:183.72px;width:135.60px;">6,552,700</div>
<div class="t tr" style="left:799.50px;top:183.72px;width:135.10px;">99</div>
<div class="a " style="left:525.20px;top:197.56px;width:137.20px;height:1.00px;background:#c4c5c7;"></div>
<div class="a " style="left:662.40px;top:197.56px;width:137.10px;height:1.00px;background:#c4c5c7;"></div>
<div class="a " style="left:799.50px;top:197.56px;width:137.10px;height:1.00px;background:#c4c5c7;"></div>
<div class="t tc" style="left:525.20px;top:198.40px;width:137.20px;">2022-09-30</div>
<div class="t tr" style="left:662.40px;top:198.40px;width:135.60px;">13,936,340</div>
<div class="t tr" style="left:799.50px;top:198.40px;width:135.10px;">77</div>
<div class="a " style="left:525.20px;top:212.24px;width:137.20px;height:1.00px;background:#c4c5c7;"></div>
<div class="a " style="left:662.40px;top:212.24px;width:137.10px;height:1.00px;background:#c4c5c7;"></div>
<div class="a " style="left:799.50px;top:212.24px;width:137.10px;height:1.00px;background:#c4c5c7;"></div>
<div class="t tc" style="left:525.20px;top:213.08px;width:137.20px;">2022-08-01</div>
<div class="t tr" style="left:662.40px;top:213.08px;width:135.60px;">5,336,430</div>
<div class="t tr" style="left:799.50px;top:213.08px;width:135.10px;">123</div>
<div class="a " style="left:525.20px;top:226.92px;width:137.20px;height:1.00px;background:#c4c5c7;"></div>
<div class="a " style="left:662.40px;top:226.92px;width:137.10px;height:1.00px;background:#c4c5c7;"></div>
<div class="a " style="left:799.50px;top:226.92px;width:137.10px;height:1.00px;background:#c4c5c7;"></div>
<div class="t tc" style="left:525.20px;top:227.76px;width:137.20px;">2022-02-22</div>
<div class="t tr" style="left:662.40px;top:227.76px;width:135.60px;">5,586,649</div>
<div class="t tr" style="left:799.50px;top:227.76px;width:135.10px;">22</div>
<div class="a " style="left:525.20px;top:241.60px;width:137.20px;height:1.00px;background:#c4c5c7;"></div>
<div class="a " style="left:662.40px;top:241.60px;width:137.10px;height:1.00px;background:#c4c5c7;"></div>
<div class="a " style="left:799.50px;top:241.60px;width:137.10px;height:1.00px;background:#c4c5c7;"></div>
<div class="t tc" style="left:525.20px;top:242.44px;width:137.20px;">2022-03-31</div>
<div class="t tr" style="left:662.40px;top:242.44px;width:135.60px;">6,424,275</div>
<div class="t tr" style="left:799.50px;top:242.44px;width:135.10px;">59</div>
<div class="a " style="left:525.20px;top:256.28px;width:137.20px;height:1.00px;background:#c4c5c7;"></div>
<div class="a " style="left:662.40px;top:256.28px;width:137.10px;height:1.00px;background:#c4c5c7;"></div>
<div class="a " style="left:799.50px;top:256.28px;width:137.10px;height:1.00px;background:#c4c5c7;"></div>
<div class="t tc" style="left:525.20px;top:257.12px;width:137.20px;">2023-01-02</div>
<div class="t tr" style="left:662.40px;top:257.12px;width:135.60px;">-12,507,959</div>
<div class="t tr" style="left:799.50px;top:257.12px;width:135.10px;">336</div>
<div class="a " style="left:525.20px;top:270.96px;width:137.20px;height:1.00px;background:#c4c5c7;"></div>
<div class="a " style="left:662.40px;top:270.96px;width:137.10px;height:1.00px;background:#c4c5c7;"></div>
<div class="a " style="left:799.50px;top:270.96px;width:137.10px;height:1.00px;background:#c4c5c7;"></div>
<div class="t tc" style="left:525.20px;top:271.80px;width:137.20px;">2023-01-02</div>
<div class="t tr" style="left:662.40px;top:271.80px;width:135.60px;">12,507,959</div>
<div class="t tr" style="left:799.50px;top:271.80px;width:135.10px;">336</div>
<div class="a " style="left:525.20px;top:285.64px;width:137.20px;height:1.00px;background:#c4c5c7;"></div>
<div class="a " style="left:662.40px;top:285.64px;width:137.10px;height:1.00px;background:#c4c5c7;"></div>
<div class="a " style="left:799.50px;top:285.64px;width:137.10px;height:1.00px;background:#c4c5c7;"></div>
<div class="t tc" style="left:525.20px;top:286.48px;width:137.20px;">2022-03-31</div>
<div class="t tr" style="left:662.40px;top:286.48px;width:135.60px;">10,048,500</div>
<div class="t tr" style="left:799.50px;top:286.48px;width:135.10px;">31</div>
<div class="a " style="left:525.20px;top:300.32px;width:137.20px;height:1.00px;background:#c4c5c7;"></div>
<div class="a " style="left:662.40px;top:300.32px;width:137.10px;height:1.00px;background:#c4c5c7;"></div>
<div class="a " style="left:799.50px;top:300.32px;width:137.10px;height:1.00px;background:#c4c5c7;"></div>
<div class="t tc" style="left:525.20px;top:301.16px;width:137.20px;">2022-04-29</div>
<div class="t tr" style="left:662.40px;top:301.16px;width:135.60px;">10,048,500</div>
<div class="t tr" style="left:799.50px;top:301.16px;width:135.10px;">60</div>
<div class="a " style="left:525.20px;top:315.00px;width:137.20px;height:1.00px;background:#c4c5c7;"></div>
<div class="a " style="left:662.40px;top:315.00px;width:137.10px;height:1.00px;background:#c4c5c7;"></div>
<div class="a " style="left:799.50px;top:315.00px;width:137.10px;height:1.00px;background:#c4c5c7;"></div>
<div class="t tc" style="left:525.20px;top:315.84px;width:137.20px;">2022-04-29</div>
<div class="t tr" style="left:662.40px;top:315.84px;width:135.60px;">6,036,800</div>
<div class="t tr" style="left:799.50px;top:315.84px;width:135.10px;">29</div>
<div class="a " style="left:525.20px;top:329.68px;width:137.20px;height:1.00px;background:#c4c5c7;"></div>
<div class="a " style="left:662.40px;top:329.68px;width:137.10px;height:1.00px;background:#c4c5c7;"></div>
<div class="a " style="left:799.50px;top:329.68px;width:137.10px;height:1.00px;background:#c4c5c7;"></div>
<div class="t tc" style="left:525.20px;top:330.52px;width:137.20px;">2022-05-25</div>
<div class="t tr" style="left:662.40px;top:330.52px;width:135.60px;">6,036,800</div>
<div class="t tr" style="left:799.50px;top:330.52px;width:135.10px;">55</div>
<div class="a " style="left:525.20px;top:344.36px;width:137.20px;height:1.00px;background:#c4c5c7;"></div>
<div class="a " style="left:662.40px;top:344.36px;width:137.10px;height:1.00px;background:#c4c5c7;"></div>
<div class="a " style="left:799.50px;top:344.36px;width:137.10px;height:1.00px;background:#c4c5c7;"></div>
<div class="t tc" style="left:525.20px;top:345.20px;width:137.20px;">2022-05-25</div>
<div class="t tr" style="left:662.40px;top:345.20px;width:135.60px;">13,398,000</div>
<div class="t tr" style="left:799.50px;top:345.20px;width:135.10px;">25</div>
<div class="a " style="left:525.20px;top:359.04px;width:137.20px;height:1.00px;background:#c4c5c7;"></div>
<div class="a " style="left:662.40px;top:359.04px;width:137.10px;height:1.00px;background:#c4c5c7;"></div>
<div class="a " style="left:799.50px;top:359.04px;width:137.10px;height:1.00px;background:#c4c5c7;"></div>
<div class="t tc" style="left:525.20px;top:359.88px;width:137.20px;">2022-06-24</div>
<div class="t tr" style="left:662.40px;top:359.88px;width:135.60px;">13,398,000</div>
<div class="t tr" style="left:799.50px;top:359.88px;width:135.10px;">55</div>
<div class="a " style="left:525.20px;top:373.72px;width:137.20px;height:1.00px;background:#c4c5c7;"></div>
<div class="a " style="left:662.40px;top:373.72px;width:137.10px;height:1.00px;background:#c4c5c7;"></div>
<div class="a " style="left:799.50px;top:373.72px;width:137.10px;height:1.00px;background:#c4c5c7;"></div>
<div class="t tc" style="left:525.20px;top:374.56px;width:137.20px;">2022-06-24</div>
<div class="t tr" style="left:662.40px;top:374.56px;width:135.60px;">41,581,210</div>
<div class="t tr" style="left:799.50px;top:374.56px;width:135.10px;">24</div>
<div class="a " style="left:525.20px;top:388.40px;width:137.20px;height:1.00px;background:#c4c5c7;"></div>
<div class="a " style="left:662.40px;top:388.40px;width:137.10px;height:1.00px;background:#c4c5c7;"></div>
<div class="a " style="left:799.50px;top:388.40px;width:137.10px;height:1.00px;background:#c4c5c7;"></div>
<div class="t tc" style="left:525.20px;top:389.24px;width:137.20px;">2022-07-22</div>
<div class="t tr" style="left:662.40px;top:389.24px;width:135.60px;">41,581,210</div>
<div class="t tr" style="left:799.50px;top:389.24px;width:135.10px;">52</div>
<div class="a " style="left:525.20px;top:403.08px;width:137.20px;height:1.00px;background:#c4c5c7;"></div>
<div class="a " style="left:662.40px;top:403.08px;width:137.10px;height:1.00px;background:#c4c5c7;"></div>
<div class="a " style="left:799.50px;top:403.08px;width:137.10px;height:1.00px;background:#c4c5c7;"></div>
<div class="t tc" style="left:525.20px;top:403.92px;width:137.20px;">2022-07-22</div>
<div class="t tr" style="left:662.40px;top:403.92px;width:135.60px;">41,221,455</div>
<div class="t tr" style="left:799.50px;top:403.92px;width:135.10px;">22</div>
<div class="a " style="left:525.20px;top:417.76px;width:137.20px;height:1.00px;background:#c4c5c7;"></div>
<div class="a " style="left:662.40px;top:417.76px;width:137.10px;height:1.00px;background:#c4c5c7;"></div>
<div class="a " style="left:799.50px;top:417.76px;width:137.10px;height:1.00px;background:#c4c5c7;"></div>
<div class="t tc" style="left:525.20px;top:418.60px;width:137.20px;">2022-08-31</div>
<div class="t tr" style="left:662.40px;top:418.60px;width:135.60px;">41,221,455</div>
<div class="t tr" style="left:799.50px;top:418.60px;width:135.10px;">62</div>
<div class="a " style="left:525.20px;top:432.44px;width:137.20px;height:1.00px;background:#c4c5c7;"></div>
<div class="a " style="left:662.40px;top:432.44px;width:137.10px;height:1.00px;background:#c4c5c7;"></div>
<div class="a " style="left:799.50px;top:432.44px;width:137.10px;height:1.00px;background:#c4c5c7;"></div>
<div class="t tc" style="left:525.20px;top:433.28px;width:137.20px;">2022-08-31</div>
<div class="t tr" style="left:662.40px;top:433.28px;width:135.60px;">15,874,100</div>
<div class="t tr" style="left:799.50px;top:433.28px;width:135.10px;">31</div>
<div class="a " style="left:525.20px;top:447.12px;width:137.20px;height:1.00px;background:#c4c5c7;"></div>
<div class="a " style="left:662.40px;top:447.12px;width:137.10px;height:1.00px;background:#c4c5c7;"></div>
<div class="a " style="left:799.50px;top:447.12px;width:137.10px;height:1.00px;background:#c4c5c7;"></div>
<div class="t tc" style="left:525.20px;top:447.96px;width:137.20px;">2022-09-30</div>
<div class="t tr" style="left:662.40px;top:447.96px;width:135.60px;">15,874,100</div>
<div class="t tr" style="left:799.50px;top:447.96px;width:135.10px;">61</div>
<div class="a " style="left:525.20px;top:461.80px;width:137.20px;height:1.00px;background:#c4c5c7;"></div>
<div class="a " style="left:662.40px;top:461.80px;width:137.10px;height:1.00px;background:#c4c5c7;"></div>
<div class="a " style="left:799.50px;top:461.80px;width:137.10px;height:1.00px;background:#c4c5c7;"></div>
<div class="t tc" style="left:525.20px;top:462.64px;width:137.20px;">2022-09-30</div>
<div class="t tr" style="left:662.40px;top:462.64px;width:135.60px;">8,064,045</div>
<div class="t tr" style="left:799.50px;top:462.64px;width:135.10px;">30</div>
<div class="a " style="left:525.20px;top:476.48px;width:137.20px;height:1.00px;background:#c4c5c7;"></div>
<div class="a " style="left:662.40px;top:476.48px;width:137.10px;height:1.00px;background:#c4c5c7;"></div>
<div class="a " style="left:799.50px;top:476.48px;width:137.10px;height:1.00px;background:#c4c5c7;"></div>
<div class="t tc" style="left:525.20px;top:477.32px;width:137.20px;">2022-10-31</div>
<div class="t tr" style="left:662.40px;top:477.32px;width:135.60px;">8,064,045</div>
<div class="t tr" style="left:799.50px;top:477.32px;width:135.10px;">61</div>
<div class="a " style="left:525.20px;top:491.16px;width:137.20px;height:1.00px;background:#c4c5c7;"></div>
<div class="a " style="left:662.40px;top:491.16px;width:137.10px;height:1.00px;background:#c4c5c7;"></div>
<div class="a " style="left:799.50px;top:491.16px;width:137.10px;height:1.00px;background:#c4c5c7;"></div>
<div class="t tc" style="left:525.20px;top:492.00px;width:137.20px;">2023-01-02</div>
<div class="t tr" style="left:662.40px;top:492.00px;width:135.60px;">44,675,180</div>
<div class="t tr" style="left:799.50px;top:492.00px;width:135.10px;">33</div>
<div class="a " style="left:525.20px;top:505.84px;width:137.20px;height:1.00px;background:#c4c5c7;"></div>
<div class="a " style="left:662.40px;top:505.84px;width:137.10px;height:1.00px;background:#c4c5c7;"></div>
<div class="a " style="left:799.50px;top:505.84px;width:137.10px;height:1.00px;background:#c4c5c7;"></div>
<div class="t tc" style="left:525.20px;top:506.68px;width:137.20px;">2022-02-28</div>
<div class="t tr" style="left:662.40px;top:506.68px;width:135.60px;">5,512,320</div>
<div class="t tr" style="left:799.50px;top:506.68px;width:135.10px;">28</div>
<div class="a " style="left:525.20px;top:520.52px;width:137.20px;height:1.00px;background:#c4c5c7;"></div>
<div class="a " style="left:662.40px;top:520.52px;width:137.10px;height:1.00px;background:#c4c5c7;"></div>
<div class="a " style="left:799.50px;top:520.52px;width:137.10px;height:1.00px;background:#c4c5c7;"></div>
<div class="t tc" style="left:525.20px;top:521.36px;width:137.20px;">2022-02-28</div>
<div class="t tr" style="left:662.40px;top:521.36px;width:135.60px;">5,967,500</div>
<div class="t tr" style="left:799.50px;top:521.36px;width:135.10px;">28</div>
<div class="a " style="left:525.20px;top:535.20px;width:137.20px;height:1.00px;background:#c4c5c7;"></div>
<div class="a " style="left:662.40px;top:535.20px;width:137.10px;height:1.00px;background:#c4c5c7;"></div>
<div class="a " style="left:799.50px;top:535.20px;width:137.10px;height:1.00px;background:#c4c5c7;"></div>
<div class="t tc" style="left:525.20px;top:536.04px;width:137.20px;">2022-02-28</div>
<div class="t tr" style="left:662.40px;top:536.04px;width:135.60px;">14,080,220</div>
<div class="t tr" style="left:799.50px;top:536.04px;width:135.10px;">28</div>
<div class="a " style="left:525.20px;top:549.88px;width:137.20px;height:1.00px;background:#c4c5c7;"></div>
<div class="a " style="left:662.40px;top:549.88px;width:137.10px;height:1.00px;background:#c4c5c7;"></div>
<div class="a " style="left:799.50px;top:549.88px;width:137.10px;height:1.00px;background:#c4c5c7;"></div>
<div class="t tc" style="left:525.20px;top:550.72px;width:137.20px;">2022-03-31</div>
<div class="t tr" style="left:662.40px;top:550.72px;width:135.60px;">740,520</div>
<div class="t tr" style="left:799.50px;top:550.72px;width:135.10px;">31</div>
<div class="a " style="left:525.20px;top:564.56px;width:137.20px;height:1.00px;background:#c4c5c7;"></div>
<div class="a " style="left:662.40px;top:564.56px;width:137.10px;height:1.00px;background:#c4c5c7;"></div>
<div class="a " style="left:799.50px;top:564.56px;width:137.10px;height:1.00px;background:#c4c5c7;"></div>
<div class="t tc" style="left:525.20px;top:565.40px;width:137.20px;">2022-04-29</div>
<div class="t tr" style="left:662.40px;top:565.40px;width:135.60px;">2,612,500</div>
<div class="t tr" style="left:799.50px;top:565.40px;width:135.10px;">29</div>
<div class="a " style="left:525.20px;top:579.24px;width:137.20px;height:1.00px;background:#c4c5c7;"></div>
<div class="a " style="left:662.40px;top:579.24px;width:137.10px;height:1.00px;background:#c4c5c7;"></div>
<div class="a " style="left:799.50px;top:579.24px;width:137.10px;height:1.00px;background:#c4c5c7;"></div>
<div class="t tc" style="left:525.20px;top:580.08px;width:137.20px;">2022-04-29</div>
<div class="t tr" style="left:662.40px;top:580.08px;width:135.60px;">6,654,450</div>
<div class="t tr" style="left:799.50px;top:580.08px;width:135.10px;">29</div>
<div class="a " style="left:525.20px;top:593.92px;width:137.20px;height:1.00px;background:#c4c5c7;"></div>
<div class="a " style="left:662.40px;top:593.92px;width:137.10px;height:1.00px;background:#c4c5c7;"></div>
<div class="a " style="left:799.50px;top:593.92px;width:137.10px;height:1.00px;background:#c4c5c7;"></div>
<div class="a " style="left:30.80px;top:95.30px;width:1.00px;height:501.70px;background:#6c8db3;"></div>
<div class="a " style="left:250.50px;top:95.30px;width:1.00px;height:501.70px;background:#aeb0b4;"></div>
<div class="a " style="left:387.50px;top:95.30px;width:1.00px;height:501.70px;background:#aeb0b4;"></div>
<div class="a " style="left:524.70px;top:95.30px;width:1.00px;height:501.70px;background:#6e6e6e;"></div>
<div class="a " style="left:661.90px;top:95.30px;width:1.00px;height:501.70px;background:#a2a2a2;"></div>
<div class="a " style="left:799.00px;top:95.30px;width:1.00px;height:501.70px;background:#a2a2a2;"></div>
<div class="a " style="left:936.10px;top:95.30px;width:1.00px;height:501.70px;background:#a2a2a2;"></div>
<div class="a " style="left:251.50px;top:95.30px;width:1.00px;height:501.70px;background:#f6f8fe;"></div>
<div class="a " style="left:388.50px;top:95.30px;width:1.00px;height:501.70px;background:#f6f8fe;"></div>
<div class="a" style="left:4px;top:79.8px;width:1352px;height:1px;background:#6a6a6a;"></div>
<div class="a" style="left:4px;top:94.8px;width:932.6px;height:1px;background:#6a6a6a;"></div>
<div class="a" style="left:4px;top:80px;width:1px;height:517px;background:#6a6a6a;"></div>
<div class="a" style="left:1345.5px;top:81px;width:10.5px;height:516px;background:#ececec;"></div>
<div class="a" style="left:1px;top:597px;width:1355px;height:1px;background:#eeeeee;"></div>
<div class="a" style="left:1px;top:615.6px;width:1363px;height:1.2px;background:#575b5d;"></div>
<div class="a" style="left:1351.2px;top:93.6px;width:1.6px;height:22.4px;background:#858585;"></div>
</body></html>
